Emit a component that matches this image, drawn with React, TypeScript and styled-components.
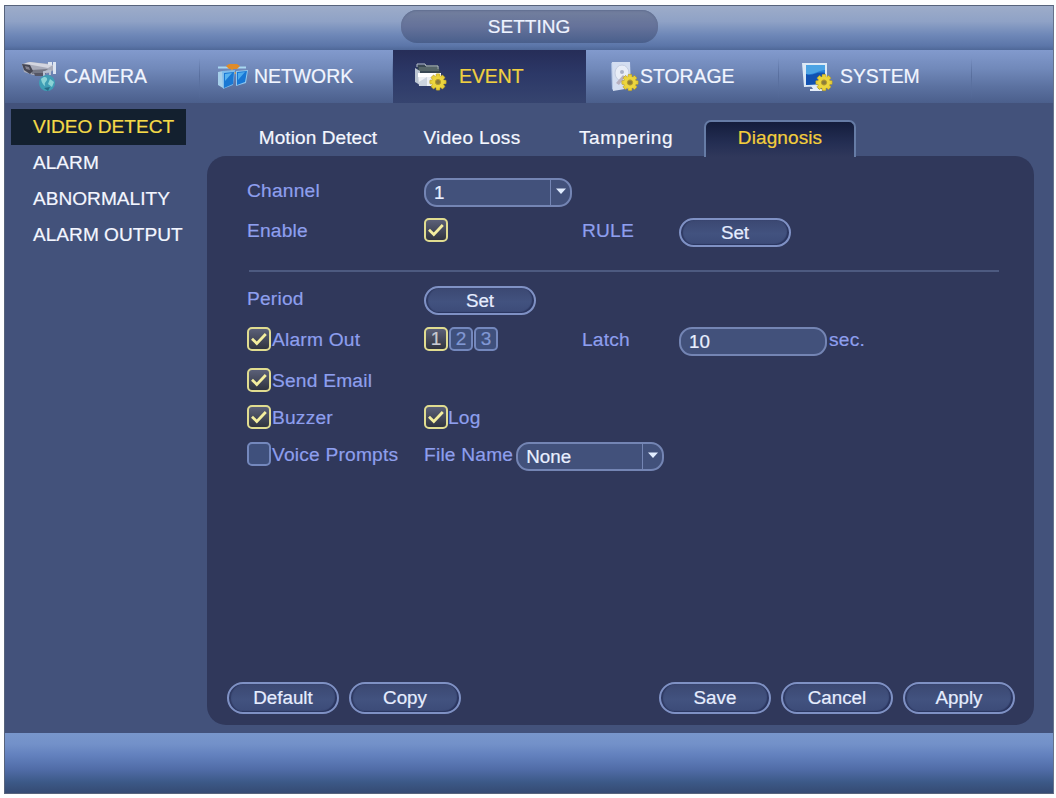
import React from "react";
import styled, { createGlobalStyle, css } from "styled-components";

const GlobalStyle = createGlobalStyle`
  *, *::before, *::after { box-sizing: border-box; }
  body {
    margin: 0;
    background: #fdfeff;
    font-family: "Liberation Sans", Arial, sans-serif;
    -webkit-text-stroke: 0.2px currentColor;
  }
  button { font-family: inherit; }
`;

const Page = styled.div`
  width: 1056px;
  height: 798px;
  padding: 5px 2px 4px 4px;
  overflow: hidden;
`;

const Window = styled.main`
  height: 789px;
  display: flex;
  flex-direction: column;
  border: 1px solid #56637c;
  border-right-color: #66718a;
  background: #43527b;
`;

const TitleBar = styled.header`
  height: 44px;
  flex: none;
  display: flex;
  justify-content: center;
  padding: 4px 0 0 0;
  background: linear-gradient(#9dacc9 0%, #8fa2c6 35%, #6f88b8 65%, #5c76a9 90%, #4f6898 100%);
`;

const TitlePill = styled.h1`
  width: 257px;
  height: 33px;
  margin: 0;
  border-radius: 16px;
  display: flex;
  align-items: center;
  justify-content: center;
  background: linear-gradient(#73809e, #65729a 50%, #495f8c);
  box-shadow: inset 0 1px 2px #5f6d90;
  color: #eef3ff;
  font-size: 19px;
  font-weight: 400;
`;

const Nav = styled.nav`
  height: 53px;
  flex: none;
  display: flex;
  background: linear-gradient(#829acd 0%, #7189ba 35%, #5b71a0 70%, #4b5f8c 100%);
`;

const NavItem = styled.a<{ $inset: number; $gap: number; $active?: boolean; $width?: number }>`
  width: ${(p) => p.$width ?? 193}px;
  flex: none;
  display: flex;
  align-items: center;
  gap: ${(p) => p.$gap}px;
  padding-left: ${(p) => p.$inset}px;
  color: #f1f5ff;
  font-size: 19.4px;
  white-space: nowrap;
  background: linear-gradient(transparent 15%, #586e9d 50%, transparent 95%) right / 1px 100% no-repeat;
  ${(p) =>
    p.$active &&
    css`
      color: #f0d040;
      background: linear-gradient(#262d58, #2c3867 45%, #36446f);
    `}
`;

const Body = styled.div`
  height: 630px;
  flex: none;
  display: flex;
`;

const Sidebar = styled.aside`
  width: 202px;
  flex: none;
  padding: 6px 0 0 6px;
`;

const SideItem = styled.a<{ $active?: boolean }>`
  display: block;
  width: 175px;
  height: 36px;
  padding-left: 22px;
  font-size: 19.1px;
  line-height: 36px;
  white-space: nowrap;
  color: ${(p) => (p.$active ? "#f4da48" : "#f3f6ff")};
  background: ${(p) => (p.$active ? "#13202f" : "transparent")};
`;

const Content = styled.section`
  width: 827px;
  padding-top: 17px;
`;

const Tabs = styled.div`
  height: 36px;
  display: flex;
  gap: 2px;
  padding-left: 35px;
`;

const Tab = styled.a<{ $active?: boolean; $spacing?: number }>`
  width: 152px;
  height: 37px;
  flex: none;
  text-align: center;
  font-size: 19px;
  letter-spacing: ${(p) => p.$spacing ?? 0.1}px;
  line-height: 31px;
  color: #f4f7ff;
  border: 2px solid transparent;
  border-bottom: 0;
  ${(p) =>
    p.$active &&
    css`
      color: #f3ce3c;
      border-color: #667ca6;
      border-radius: 7px 7px 0 0;
      background: linear-gradient(#141d3c, #242e53 60%, #30385b);
    `}
`;

const Panel = styled.div`
  height: 569px;
  display: flex;
  flex-direction: column;
  padding: 22px 19px 11px 20px;
  border-radius: 19px;
  background: #30385b;
`;

const Row = styled.div<{ $height: number }>`
  height: ${(p) => p.$height}px;
  flex: none;
  display: grid;
  grid-template-columns: 177px 158px 97px 1fr;
  align-items: start;
  padding-left: 20px;
`;

const Cell = styled.div<{ $gap?: number }>`
  display: flex;
  gap: ${(p) => p.$gap ?? 0}px;
`;

const Label = styled.span`
  color: #8e9fee;
  font-size: 19.2px;
  line-height: 26px;
  white-space: nowrap;
  letter-spacing: 0.2px;
`;

const Divider = styled.hr`
  width: 750px;
  height: 2px;
  flex: none;
  border: 0;
  margin: 0 0 14px 22px;
  background: #4d5a80;
`;

const PillButton = styled.button<{ $tall?: boolean }>`
  width: 112px;
  height: ${(p) => (p.$tall ? 32 : 29)}px;
  padding: 0;
  border: 2px solid #7f91c4;
  border-radius: 16px;
  background: linear-gradient(#3b4872, #42527f 55%, #3c4b78);
  box-shadow: inset -2px -1px 1px #2b3660, inset 2px 0 1px #2f3a63;
  color: #e6edff;
  font-size: 18.8px;
  line-height: ${(p) => (p.$tall ? 26 : 25)}px;
  -webkit-text-stroke: 0.2px currentColor;
`;

const Field = styled.div`
  width: 148px;
  height: 29px;
  flex: none;
  display: flex;
  overflow: hidden;
  border: 2px solid #7485b4;
  border-radius: 13px;
  background: #42517b;
  color: #e9efff;
  font-size: 18.8px;
  line-height: 26px;
`;

const FieldValue = styled.span`
  flex: 1;
  padding-left: 8px;
`;

const FieldArrow = styled.span`
  width: 20px;
  display: flex;
  justify-content: center;
  padding-top: 8px;
  border-left: 1px solid #7485b4;
`;

const Box = styled.span<{ $on?: boolean }>`
  width: 24px;
  height: 24px;
  flex: none;
  display: flex;
  align-items: center;
  justify-content: center;
  border: 2px solid ${(p) => (p.$on ? "#e0dc90" : "#7488bd")};
  border-radius: 5px;
  background: ${(p) => (p.$on ? "linear-gradient(#5b6078, #30343f)" : "#3f507c")};
  color: ${(p) => (p.$on ? "#c8cad2" : "#8198d4")};
  font-size: 19px;
  line-height: 20px;
`;

const Actions = styled.footer`
  display: flex;
  gap: 10px;
  margin-top: auto;
`;

const Spacer = styled.span`
  flex: 1;
`;

const BottomBar = styled.div`
  flex: 1;
  background: linear-gradient(#7896cb 0%, #7391c9 18%, #6280bd 38%, #516da8 60%, #3c5987 82%, #354a73 100%);
`;

const Check = ({ on = true }: { on?: boolean }) => (
  <Box $on={on}>
    {on && (
      <svg width="18" height="16" viewBox="0 0 18 16" fill="none">
        <path d="M2 7.8 6.8 12.4 15.8 3" stroke="#f4ee9e" strokeWidth="2.8" />
      </svg>
    )}
  </Box>
);

const Select = ({ value }: { value: string }) => (
  <Field>
    <FieldValue>{value}</FieldValue>
    <FieldArrow>
      <svg width="10" height="7" viewBox="0 0 10 7">
        <path d="M0 0.5h10L5 6z" fill="#e2edff" />
      </svg>
    </FieldArrow>
  </Field>
);

const Gear = ({ x, y }: { x: number; y: number }) => (
  <g transform={`translate(${x} ${y})`}>
    <g fill="#e8cf37" stroke="#a78d24" strokeWidth=".5">
      {[0, 45, 90, 135].map((angle) => (
        <rect key={angle} x="-2" y="-8.2" width="4" height="16.4" rx=".8" transform={`rotate(${angle})`} />
      ))}
    </g>
    <circle r="6" fill="#ecd63e" />
    <circle r="2.6" fill="#8b7d3c" stroke="#b59b2c" />
  </g>
);

const CameraIcon = () => (
  <svg width="38" height="32" viewBox="0 0 38 32">
    <path d="M1 3 8 1 31 3 34 8 28 12 12 14 3 11z" fill="#a9acba" />
    <path d="M3 2.5 9 1 32 4 27 7z" fill="#d4d6e0" />
    <path d="M10 9 27 8l-5 4-11 1z" fill="#747785" />
    <path d="M1 3 9 4 12 10 9 13 3 9z" fill="#454653" />
    <path d="M4 5 8 6 9 9 5 8z" fill="#83818e" />
    <path d="M27 1h4v3h-4zM32 1h3v12h-3z" fill="#dce4f1" />
    <path d="M13 12h12l-3 3h-8z" fill="#555665" />
    <path d="M23 15v-4l6-1v4" fill="none" stroke="#b8c0d0" strokeWidth="2" />
    <circle cx="26" cy="22" r="8" fill="#3f9eb5" />
    <path d="M20 18c4-4 7-1 6 1s-3 3-2 5-3 0-4-6zM29 18l4 3-2 5-4-3z" fill="#8bd3d6" />
    <path d="m23 27 6-1-2 4z" fill="#266c88" />
  </svg>
);

const NetworkIcon = () => (
  <svg width="33" height="28" viewBox="0 0 33 28">
    <path d="M1 4.5h28" stroke="#a9d7f0" strokeWidth="2" />
    <path d="M15 4v7M8 10h17" stroke="#d59a42" strokeWidth="1.6" />
    <path d="m9 3 3-2h8l3 2-3 3h-8z" fill="#df8b29" />
    <path d="M1 9 6 8v17l-5-3z" fill="#a6cfea" />
    <path d="m5 8 13-1-2 15-10 4z" fill="#80bceb" />
    <path d="m7 10 10-1-1 12-9 4z" fill="#1978d4" />
    <path d="m8 11 7-1-7 8z" fill="#59b3ef" />
    <path d="m19 8 12-1-2 13-10 3z" fill="#8fc8f0" />
    <path d="m20 9 10-1-2 11-8 3z" fill="#1877d5" />
    <path d="m21 10 7-1-7 8z" fill="#4caaed" />
  </svg>
);

const EventIcon = () => (
  <svg width="33" height="28" viewBox="0 0 33 28">
    <path d="M3 2h21l4 11H5z" fill="#394853" />
    <path d="M3 4V1h8l1 2h12v3" fill="none" stroke="#b8c1c8" />
    <path d="M5 5h19M5 7h20" stroke="#75837f" />
    <path d="M1 5v14l5 3V8z" fill="#bbc5d1" />
    <path d="M4 10h22l1 13H5z" fill="#edf0f3" />
    <path d="M4 10h23v4H4z" fill="#fff" />
    <path d="M13 13v10M5 19l8-5v9H5z" fill="#ccd4df" />
    <Gear x={24} y={19} />
  </svg>
);

const StorageIcon = () => (
  <svg width="29" height="32" viewBox="0 0 29 32">
    <path d="m1 2 3-1v26l-2 2z" fill="#a9bdde" />
    <path d="M2 1h18l1 26-18 3z" fill="#d4def1" />
    <ellipse cx="12" cy="12" rx="7" ry="8" fill="#e8edf7" stroke="#c4cde0" />
    <circle cx="12" cy="11" r="2" fill="#a9b0c6" />
    <path d="m6 22 7-8 2 2-6 8z" fill="#b8b0bf" />
    <Gear x={20} y={21.5} />
  </svg>
);

const SystemIcon = () => (
  <svg width="32" height="30" viewBox="0 0 32 30">
    <path d="M1 1h25v23L3 25z" fill="#dce9f6" />
    <path d="M5 3h19v18L5 23z" fill="#2580d9" />
    <path d="M5 12c6 3 10-3 19-1v11L5 23z" fill="#1151b1" />
    <path d="M5 3h19v5C18 8 14 13 5 12z" fill="#4ba3e4" />
    <path d="M10 24h7v3h4v2H9v-2h3z" fill="#e5edf8" />
    <Gear x={23} y={20.5} />
  </svg>
);

export default function App() {
  return (
    <>
      <GlobalStyle />
      <Page>
        <Window>
          <TitleBar>
            <TitlePill>SETTING</TitlePill>
          </TitleBar>
          <Nav>
            <NavItem $inset={16} $gap={5} $width={195}><CameraIcon />CAMERA</NavItem>
            <NavItem $inset={17} $gap={4}><NetworkIcon />NETWORK</NavItem>
            <NavItem $inset={21} $gap={12} $active><EventIcon />EVENT</NavItem>
            <NavItem $inset={24} $gap={1}><StorageIcon />STORAGE</NavItem>
            <NavItem $inset={22} $gap={7}><SystemIcon />SYSTEM</NavItem>
          </Nav>
          <Body>
            <Sidebar>
              <SideItem $active>VIDEO DETECT</SideItem>
              <SideItem>ALARM</SideItem>
              <SideItem>ABNORMALITY</SideItem>
              <SideItem>ALARM OUTPUT</SideItem>
            </Sidebar>
            <Content>
              <Tabs>
                <Tab>Motion Detect</Tab>
                <Tab $spacing={0.35}>Video Loss</Tab>
                <Tab $spacing={0.6}>Tampering</Tab>
                <Tab $active>Diagnosis</Tab>
              </Tabs>
              <Panel>
                <Row $height={40}>
                  <Label>Channel</Label>
                  <Select value="1" />
                </Row>
                <Row $height={52}>
                  <Label>Enable</Label>
                  <Check />
                  <Label>RULE</Label>
                  <PillButton>Set</PillButton>
                </Row>
                <Divider />
                <Row $height={41}>
                  <Label>Period</Label>
                  <PillButton>Set</PillButton>
                </Row>
                <Row $height={41}>
                  <Cell $gap={1}><Check /><Label>Alarm Out</Label></Cell>
                  <Cell $gap={1}><Box $on>1</Box><Box>2</Box><Box>3</Box></Cell>
                  <Label>Latch</Label>
                  <Cell $gap={2}><Field><FieldValue>10</FieldValue></Field><Label>sec.</Label></Cell>
                </Row>
                <Row $height={37}>
                  <Cell $gap={1}><Check /><Label>Send Email</Label></Cell>
                </Row>
                <Row $height={37}>
                  <Cell $gap={1}><Check /><Label>Buzzer</Label></Cell>
                  <Cell><Check /><Label>Log</Label></Cell>
                </Row>
                <Row $height={37}>
                  <Cell $gap={1}><Check on={false} /><Label>Voice Prompts</Label></Cell>
                  <Cell $gap={3}><Label>File Name</Label><Select value="None" /></Cell>
                </Row>
                <Actions>
                  <PillButton $tall>Default</PillButton>
                  <PillButton $tall>Copy</PillButton>
                  <Spacer />
                  <PillButton $tall>Save</PillButton>
                  <PillButton $tall>Cancel</PillButton>
                  <PillButton $tall>Apply</PillButton>
                </Actions>
              </Panel>
            </Content>
          </Body>
          <BottomBar />
        </Window>
      </Page>
    </>
  );
}
